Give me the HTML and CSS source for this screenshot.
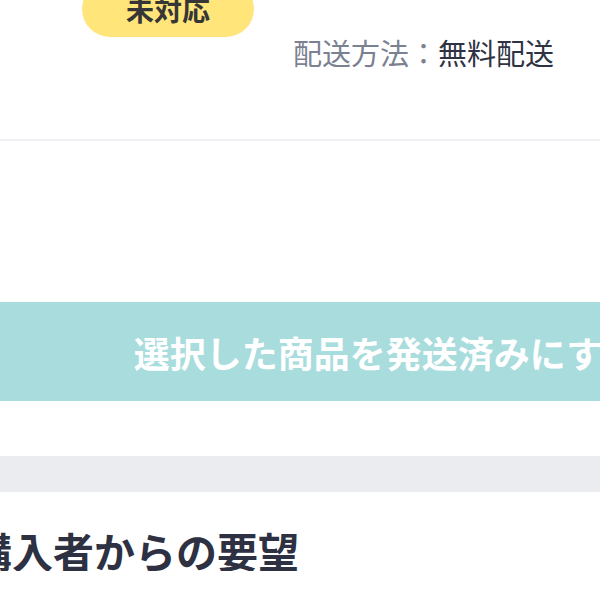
FILE: index.html
```html
<!DOCTYPE html>
<html lang="ja">
<head>
<meta charset="utf-8">
<link rel="stylesheet" href="styles.css">
</head>
<body>
<div class="page">
  <section class="order-head">
    <div class="badge">未対応</div>
    <p class="shipping"><span class="label">配送方法：</span><span class="value">無料配送</span></p>
  </section>
  <section class="actions">
    <button class="ship-btn">選択した商品を発送済みにする</button>
  </section>
  <div class="band"></div>
  <section class="requests">
    <h2 class="req-title">購入者からの要望</h2>
  </section>
</div>
</body>
</html>
```
FILE: styles.css
```css
html, body {
  margin: 0;
  padding: 0;
  background: #ffffff;
  overflow: hidden;
}
body {
  font-family: "Noto Sans CJK JP", "Noto Sans", sans-serif;
}
.page {
  width: 600px;
  display: flow-root;
}
.order-head {
  display: flow-root;
  height: 139px;
  border-bottom: 2px solid #f0f1f5;
}
.badge {
  width: 172px;
  height: 56px;
  margin-top: -19px;
  margin-left: 82px;
  border-radius: 28px;
  background: #ffe57a;
  color: #363636;
  font-size: 28px;
  font-weight: 700;
  line-height: 56px;
  text-align: center;
}
.shipping {
  margin: 1px 0 0 0;
  padding-right: 46px;
  text-align: right;
  font-size: 29px;
  line-height: 1;
  white-space: nowrap;
}
.label {
  color: #7b8191;
}
.value {
  color: #2f3243;
}
.actions {
  padding-top: 161px;
  padding-bottom: 55px;
}
.ship-btn {
  display: block;
  width: 772px;
  height: 99px;
  margin: 0;
  padding: 0;
  border: none;
  background: #a8dcdd;
  color: #ffffff;
  font-family: "Noto Sans CJK JP", "Noto Sans", sans-serif;
  font-size: 36px;
  font-weight: 700;
  line-height: 1;
  text-align: center;
  white-space: nowrap;
}
.band {
  height: 36px;
  background: #ebecf0;
}
.requests {
  padding-top: 38px;
}
.req-title {
  margin: 0 0 0 -29px;
  font-size: 41px;
  font-weight: 700;
  line-height: 1;
  color: #2d3142;
  white-space: nowrap;
}
```
